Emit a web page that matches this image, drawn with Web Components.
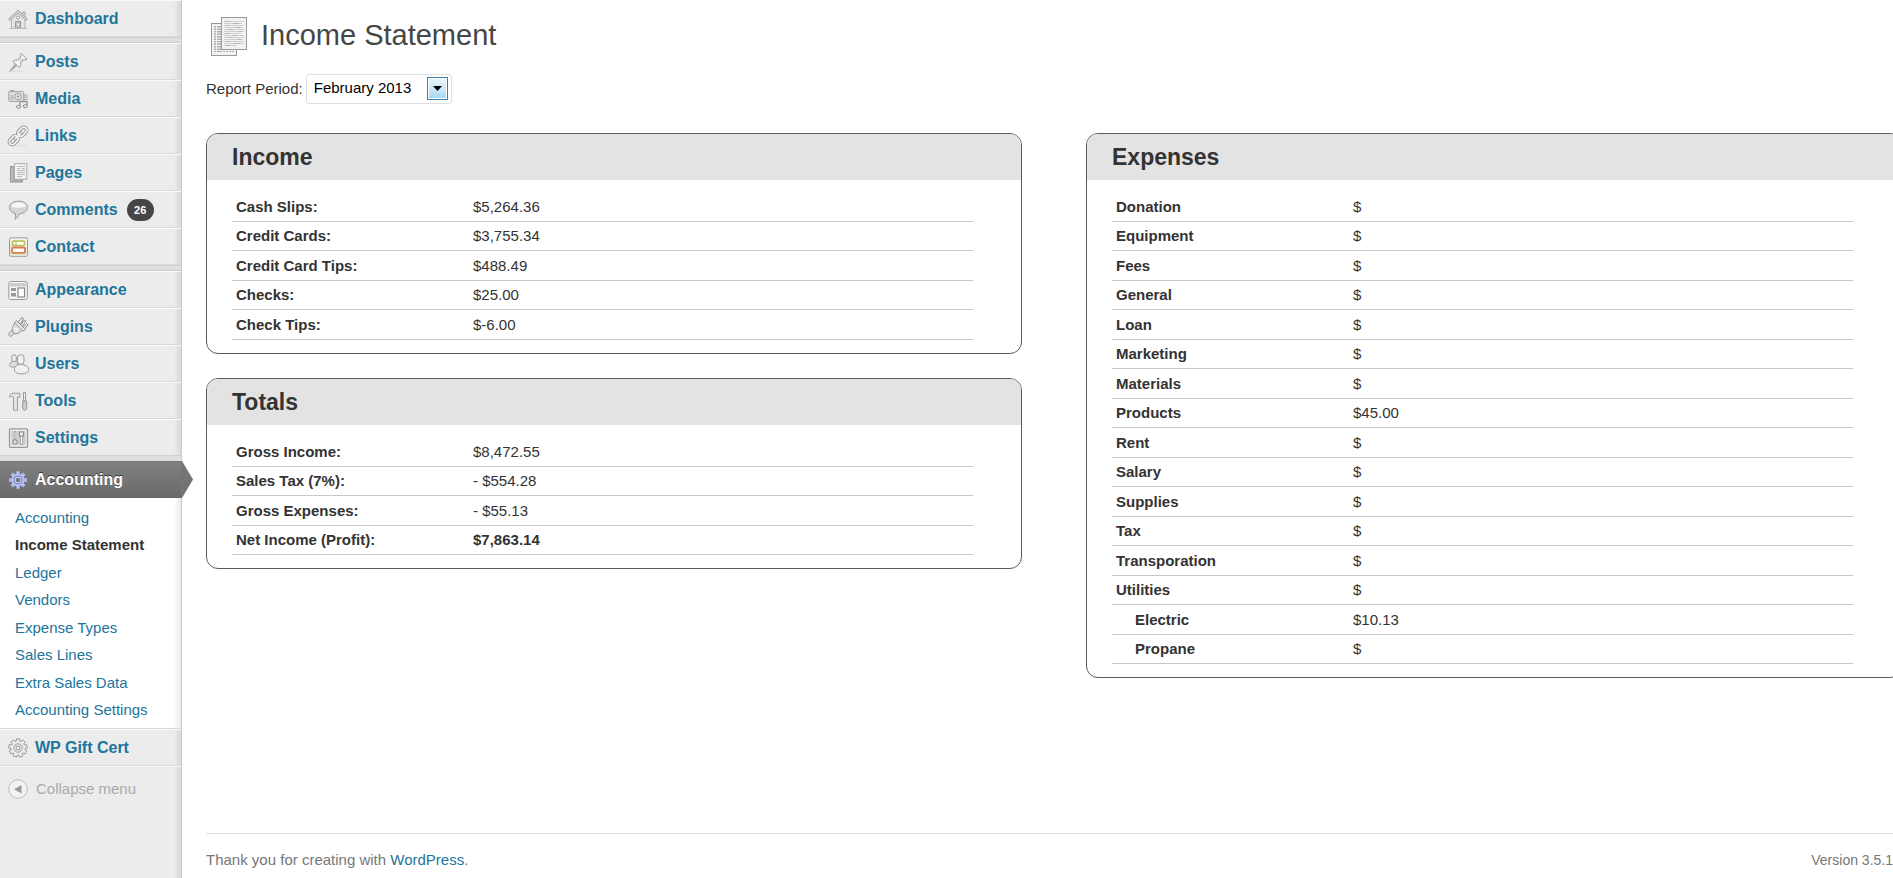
<!DOCTYPE html>
<html lang="en">
<head>
<meta charset="utf-8">
<title>Income Statement</title>
<style>
html, body { margin: 0; min-height: 100%; }
body { background: #fff; color: #333; font: 15px/20px "Liberation Sans", Arial, sans-serif; }
</style>
</head>
<body>
<admin-page></admin-page>
<script>
const gearPath = (n, outer, inner) => {
  const pts = [];
  for (let i = 0; i < n; i++) {
    const a = i * 2 * Math.PI / n;
    [[-.26, inner], [-.19, outer], [.19, outer], [.26, inner]].forEach(([d, r]) =>
      pts.push((10 + r * Math.sin(a + d)).toFixed(2) + ' ' + (10 - r * Math.cos(a + d)).toFixed(2)));
  }
  return 'M' + pts.join('L') + 'Z';
};

const ICONS = {
  dashboard: `<path d="M14.5 3h2.5v6l-2.5-2z" fill="#ddd" stroke="#aaa"/><path d="M3.5 10v9.300h13.500V10L10 4z" fill="#e6e6e6" stroke="#b5b5b5"/><path d="M1 11 10 2.500 19 11" fill="none" stroke="#a5a5a5" stroke-width="2.600"/><path d="M1.500 10.600 10 2.700 18.500 10.600" fill="none" stroke="#f4f4f4" stroke-width="1"/><circle cx="10" cy="8.500" r="1.500" fill="#fff" stroke="#999"/><path d="M7.500 12.500h5v6.500h-5z" fill="#ccc" stroke="#999"/><path d="M9 14h2.500v3H9z" fill="#fff" stroke="#aaa" stroke-width=".7"/><path d="M1 19.500h18" stroke="#bbb"/>`,
  posts: `<path d="M4 19.300h11" stroke="#ddd" stroke-width="1.500"/><path d="m7 12.500-5.500 7L8.500 14z" fill="#bbb" stroke="#999"/><path d="m13 1.500 6 5.500c-1.500 1-2.500.8-3.300.6L12.500 11c.3 2 0 3.400-1.200 4.500L4.800 9.300C6 8 7.500 8 9.300 8.200l3.300-3.500c-.3-1-.4-2 .4-3.200z" fill="#f6f6f6" stroke="#999"/><path d="m10 9 3.500-3.500M12 10l3-3" stroke="#bbb"/>`,
  media: `<rect x=".7" y="2.500" width="15" height="10" rx="1" fill="#ddd" stroke="#a5a5a5"/><path d="M2 2.500v-1h4v1M3 6v5M5 6v5" stroke="#aaa" fill="none"/><circle cx="10" cy="7.500" r="3.200" fill="#eee" stroke="#999"/><circle cx="10" cy="7.500" r="1.200" fill="#999"/><path d="M16 6h3v4.500h-3zM16 8h2" fill="#e4e4e4" stroke="#aaa"/><path d="M12 18v-5.500h7V17" fill="none" stroke="#999" stroke-width="1.400"/><ellipse cx="10.500" cy="17.800" rx="2" ry="1.500" fill="#eee" stroke="#888"/><ellipse cx="17.200" cy="17.200" rx="2" ry="1.500" fill="#eee" stroke="#888"/>`,
  links: `<path d="M8 19.800h11" stroke="#ddd"/><g fill="none" stroke-linecap="round" transform="rotate(-45 10 10)"><g stroke="#989898" stroke-width="3.600"><rect x="-1" y="7" width="10" height="6" rx="3"/><rect x="11" y="7" width="10" height="6" rx="3"/><path d="M6 10h8"/></g><g stroke="#f0f0f0" stroke-width="1.700"><rect x="-1" y="7" width="10" height="6" rx="3"/><rect x="11" y="7" width="10" height="6" rx="3"/><path d="M6 10h8"/></g></g>`,
  pages: `<rect x="2.500" y="3.500" width="12" height="15.500" fill="#aaa" stroke="#999"/><path d="M4 5v13" stroke="#ccc"/><rect x="6.500" y=".7" width="12.300" height="15.500" fill="#f4f4f4" stroke="#aaa"/><path d="M9 3.500h8M9 5.500h3M13.500 5.500H17M9 7.500h8M9 9.500h8M9 11.500h8M9 13.500h5" stroke="#bbb"/>`,
  comments: `<path d="M10.500 1.200c5.200 0 9 2.600 9 6.200 0 3.500-3.300 6-7.700 6.300-1.500 2.600-2.800 4.300-4.600 5.600.4-2 .5-3.800.1-5.900C3.800 12.600 1.500 10.400 1.500 7.400c0-3.600 3.800-6.200 9-6.200z" fill="#d6d6d6" stroke="#999"/><path d="M3 6c.5-2.500 3.500-3.700 7.500-3.700S17.500 3.500 18 6c-2.500 1.500-5 1.800-7.500 1.800S5.300 7.500 3 6z" fill="#f6f6f6"/>`,
  contact: `<rect x="1.500" y=".8" width="18" height="18.500" rx="1.500" fill="#f3f3ee" stroke="#999"/><rect x="4.500" y="4" width="12" height="4.500" rx="1" fill="#fff" stroke="#b5bd4c" stroke-width="1.500"/><path d="M8 4v4" stroke="#b5bd4c"/><rect x="4" y="10.500" width="13" height="5.500" rx="1.500" fill="#fff" stroke="#dc7a55" stroke-width="2"/><path d="M3 8.500v8.500h14.500" stroke="#cdd18a" fill="none" stroke-width=".8"/>`,
  appearance: `<rect x=".8" y="1.500" width="18.500" height="18" rx="2" fill="#f5f5f5" stroke="#999"/><path d="M2 3h16v3.500H2z" fill="#ccc"/><path d="M3 8h5v3H3zM3 13h5v3.500H3z" fill="#999"/><rect x="10" y="8" width="6.500" height="9" fill="#fff" stroke="#888" stroke-width="1.200"/>`,
  plugins: `<path d="m7 15-3 3.800c-1.500 1-4 0-3-2.300L5 12" fill="#ddd" stroke="#999"/><path d="m10.500 5 3.300-4.500 1.700 1L12.500 7M13 7.500l3.500-4.500L18 4l-3.500 5M15.500 10 18.500 6.500 20 7.800 16.500 12" fill="#eee" stroke="#8c8c8c"/><path d="m8.500 3.500 9 9c-1.500 1.300-2.500 1.500-4 1.300-2.500 2.700-5 3.200-7.500 2.700-2-2.300-2.500-5-.5-8C6 6.500 7 5 8.500 3.500z" fill="#e0e0e0" stroke="#909090"/><path d="m7 6.500 7.500 7.300" stroke="#999"/><path d="m6 12 4-1-2 4" fill="none" stroke="#fff"/>`,
  users: `<path d="M1.500 10.500C2 8 4 7 6 7s4 1 4 4-2 2-4 2-5 0-4.500-2.500z" fill="#ddd" stroke="#999"/><rect x="3.800" y=".8" width="4.500" height="7" rx="2.200" fill="#eee" stroke="#999"/><path d="M6.500 15.500c0-3.500 3-5 6.500-5s7.700 2 7.700 5-3.200 4.300-7.200 4.300-7-1.500-7-4.300z" fill="#f0f0f0" stroke="#999"/><rect x="9.500" y=".8" width="6.500" height="9.500" rx="3" fill="#f2f2f2" stroke="#999"/>`,
  tools: `<path d="M1.500 6c0-2.500 2-3.800 4-3.800h6.300v4H9.500v13H5.500v-13C4 5.500 3 5.500 1.500 6z" fill="#e6e6e6" stroke="#999"/><path d="M15.500 1.500h2V10h-2z" fill="#eee" stroke="#999"/><path d="M14.700 10h4v7.500c0 2-4 2-4 0z" fill="#ccc" stroke="#999"/>`,
  settings: `<rect x="1.500" y=".8" width="18" height="18.500" rx="1" fill="#ececec" stroke="#999" stroke-width="1.300"/><rect x="3.500" y="3" width="14" height="14" fill="#ccc"/><path d="M7 3.500v8M13.500 8.500V17" stroke="#888" stroke-width="2"/><path d="M7 4v7M13.500 9v7" stroke="#fff"/><circle cx="7" cy="14" r="2.300" fill="#ddd" stroke="#888"/><rect x="11.500" y="4" width="4" height="4" fill="#eee" stroke="#888"/>`,
  accounting: `<path d="${gearPath(8, 9, 6.4)}" fill="#b4bff3"/><circle cx="10" cy="10" r="4" fill="#c6cffa" stroke="#7480c0" stroke-width="1"/><circle cx="10" cy="10" r="2.200" fill="#757575"/>`,
  gift: `<path d="${gearPath(9, 9.3, 7)}" fill="#ececec" stroke="#999"/><circle cx="10" cy="10" r="4.300" fill="#ddd" stroke="#aaa"/><circle cx="10" cy="10" r="1.800" fill="#fff" stroke="#999"/>`
};

const INCOME = [['Cash Slips:', '$5,264.36'], ['Credit Cards:', '$3,755.34'], ['Credit Card Tips:', '$488.49'], ['Checks:', '$25.00'], ['Check Tips:', '$-6.00']];
const TOTALS = [['Gross Income:', '$8,472.55'], ['Sales Tax (7%):', '- $554.28'], ['Gross Expenses:', '- $55.13'], ['Net Income (Profit):', '$7,863.14', 'strong']];
const EXPENSES = [
  ...['Donation', 'Equipment', 'Fees', 'General', 'Loan', 'Marketing', 'Materials'].map(n => [n, '$']),
  ['Products', '$45.00'],
  ...['Rent', 'Salary', 'Supplies', 'Tax', 'Transporation', 'Utilities'].map(n => [n, '$']),
  ['Electric', '$10.13', 'sub'], ['Propane', '$', 'sub']
];

class MenuItem extends HTMLElement {
  connectedCallback() {
    const active = this.hasAttribute('active');
    this.attachShadow({ mode: 'open' }).innerHTML = `
<style>
:host { display: block; }
a { display: flex; align-items: center; gap: 7px; height: 35px; padding-left: 8px; border-top: 1px solid #fafafa; border-bottom: 1px solid #dadada;
  font-size: 16px; font-weight: bold; color: #21759b; text-decoration: none; }
svg { width: 20px; height: 20px; flex: none; overflow: visible; }
:host([active]) a { position: relative; background: linear-gradient(#808080, #6a6a6a); border-color: #777 transparent #666; color: #fff; text-shadow: 0 -1px 0 #333; }
a .tip { position: absolute; left: 100%; top: -1px; width: 12px; height: 37px; }
</style>
<a href="#"><svg viewBox="0 0 20 20" aria-hidden="true">${ICONS[this.getAttribute('icon')]}</svg><slot></slot>${active ? '<svg class="tip" viewBox="0 0 12 37" aria-hidden="true"><path d="M0 0h1l11 18.500L1 37H0z" fill="#747474"/></svg>' : ''}</a>`;
  }
}

class CountBadge extends HTMLElement {
  connectedCallback() {
    this.attachShadow({ mode: 'open' }).innerHTML = `
<style>:host { display: block; margin-left: 2px; min-width: 27px; border-radius: 11px; background: #464646; color: #fff; font-size: 11px; line-height: 22px; text-align: center; }</style><slot></slot>`;
  }
}

class SubMenu extends HTMLElement {
  connectedCallback() {
    const items = ['Accounting', 'Income Statement', 'Ledger', 'Vendors', 'Expense Types', 'Sales Lines', 'Extra Sales Data', 'Accounting Settings'];
    this.attachShadow({ mode: 'open' }).innerHTML = `
<style>
:host { display: block; background: linear-gradient(to right, #fff 174px, #e9e9e9); border-bottom: 1px solid #dadada; }
ul { margin: 0; padding: 6px 0 4px 15px; list-style: none; }
li { line-height: 27px; }
li:nth-child(even) { line-height: 28px; }
a { color: #21759b; text-decoration: none; }
a[aria-current] { color: #333; font-weight: bold; }
</style>
<ul>${items.map((t, i) => `<li><a href="#"${i === 1 ? ' aria-current="page"' : ''}>${t}</a></li>`).join('')}</ul>`;
  }
}

class AdminMenu extends HTMLElement {
  connectedCallback() {
    this.attachShadow({ mode: 'open' }).innerHTML = `
<style>
:host { display: block; box-sizing: border-box; background: linear-gradient(to right, #ececec 174px, #d8d8d8); border-right: 1px solid #ccc; }
.gap { height: 4px; background: #dfdfdf; border-top: 1px solid #d0d0d0; border-bottom: 1px solid #ccc; }
.gap.flush { height: 5px; border-bottom: 0; margin-top: -1px; }
button { display: flex; align-items: center; gap: 8px; height: 44px; width: 100%; padding: 0 0 0 8px; border: 0; border-top: 1px solid #f6f6f6; background: none; color: #aaa; font: inherit; text-align: left; }
svg { width: 20px; height: 20px; }
</style>
<nav aria-label="Main">
<menu-item icon="dashboard">Dashboard</menu-item>
<div class="gap"></div>
<menu-item icon="posts">Posts</menu-item>
<menu-item icon="media">Media</menu-item>
<menu-item icon="links">Links</menu-item>
<menu-item icon="pages">Pages</menu-item>
<menu-item icon="comments">Comments <count-badge>26</count-badge></menu-item>
<menu-item icon="contact">Contact</menu-item>
<div class="gap"></div>
<menu-item icon="appearance">Appearance</menu-item>
<menu-item icon="plugins">Plugins</menu-item>
<menu-item icon="users">Users</menu-item>
<menu-item icon="tools">Tools</menu-item>
<menu-item icon="settings">Settings</menu-item>
<div class="gap flush"></div>
<menu-item icon="accounting" active>Accounting</menu-item>
<sub-menu></sub-menu>
<menu-item icon="gift">WP Gift Cert</menu-item>
<button type="button"><svg viewBox="0 0 20 20" aria-hidden="true"><circle cx="10" cy="10" r="9.300" fill="#f2f2f2" stroke="#bbb"/><path d="M13.500 6v8.500L6 10.200z" fill="#999"/></svg>Collapse menu</button>
</nav>`;
  }
}

class PeriodPicker extends HTMLElement {
  connectedCallback() {
    this.attachShadow({ mode: 'open' }).innerHTML = `
<style>
:host { display: flex; align-items: center; gap: 3px; }
.box { position: relative; }
select { display: block; appearance: none; width: 146px; height: 30px; padding: 0 24px 3px 7px; border: 1px solid #dfdfdf; border-radius: 3px; background: #fff; color: #000; font: inherit; }
svg { position: absolute; right: 4px; top: 3px; width: 21px; height: 23px; pointer-events: none; }
</style>
<label for="period">Report Period:</label>
<div class="box"><select id="period"><option>February 2013</option></select>
<svg viewBox="0 0 21 23" aria-hidden="true"><defs><linearGradient id="g" x2="0" y2="1"><stop offset="0" stop-color="#e6f4fc"/><stop offset=".5" stop-color="#cdeafa"/><stop offset="1" stop-color="#a5d8f5"/></linearGradient></defs><rect x=".5" y=".5" width="20" height="22" fill="#fff" stroke="#3c7fb1"/><rect x="2" y="2" width="17" height="19" fill="url(#g)"/><path d="M6 9h9l-4.500 5z" fill="#000"/></svg></div>`;
  }
}

class ReportPanel extends HTMLElement {
  set rows(rows) {
    this.attachShadow({ mode: 'open' }).innerHTML = `
<style>
:host { display: block; border: 1px solid #5c5c5c; border-radius: 12px; overflow: hidden; }
h2 { margin: 0; padding: 0 25px; background: #e3e3e3; font-size: 23px; line-height: 46px; }
.body { padding: 12px 48px 13px 25px; }
table { width: 100%; table-layout: fixed; border-collapse: separate; border-spacing: 0; }
th, td { box-sizing: border-box; height: 30px; padding: 0 4px; border-bottom: 1px solid #c8c8c8; line-height: 20px; text-align: left; vertical-align: middle; }
tr:nth-child(even) > * { height: 29px; }
th { width: 237px; }
.sub th { padding-left: 23px; }
.strong td { font-weight: bold; }
</style>
<h2>${this.getAttribute('heading')}</h2>
<div class="body"><table aria-label="${this.getAttribute('heading')}"><tbody>${rows.map(([n, v, c]) => `<tr class="${c || ''}"><th scope="row">${n}</th><td>${v}</td></tr>`).join('')}</tbody></table></div>`;
  }
}

class AdminPage extends HTMLElement {
  connectedCallback() {
    const root = this.attachShadow({ mode: 'open' });
    root.innerHTML = `
<style>
:host { display: grid; grid-template-columns: 182px minmax(0, 1fr); min-height: 100vh; overflow: hidden; }
.content { display: flex; flex-direction: column; padding-left: 24px; }
header { display: flex; align-items: center; gap: 14px; padding: 16px 0 0 5px; }
header svg { width: 36px; height: 40px; }
h1 { margin: 0; padding-bottom: 2px; font-size: 29px; font-weight: normal; line-height: 38px; color: #464646; }
period-picker { margin: 18px 0 29px; }
.columns { display: grid; grid-template-columns: 1fr 1fr; gap: 64px; align-items: start; margin-right: -9px; }
.stack { display: grid; gap: 24px; }
footer { display: flex; justify-content: space-between; align-items: baseline; margin-top: auto; padding: 16px 0 8px; border-top: 1px solid #dfdfdf; color: #777; }
footer p { margin: 0; }
.version { font-size: 14px; }
footer a { color: #21759b; text-decoration: none; }
</style>
<admin-menu></admin-menu>
<div class="content">
<header><svg viewBox="0 0 36 40" aria-hidden="true"><rect x=".5" y="7.500" width="25" height="32" fill="#f2f2f2" stroke="#999"/><path d="M4 10v26M7 10v26M9 10v26" stroke="#999" stroke-width="1.500" stroke-dasharray="1.500 1"/><path d="M3 35.500h20" stroke="#aaa" stroke-dasharray="2 1"/><rect x="10.500" y="1.500" width="25" height="32" fill="#f2f2f2" stroke="#999"/><path d="M13 5.500h20M13 7.500h18M13 9.500h20M13 11.500h19M13 13.500h20M13 15.500h20M13 17.500h17M13 19.500h20M13 21.500h20M13 23.500h19M13 25.500h20M13 27.500h20M13 29.500h12" stroke="#cfcfcf"/><path d="M14 5.500h4M22 7.500h6M15 9.500h3M25 11.500h5M16 13.500h6M28 15.500h3M14 17.500h5M22 19.500h4M17 21.500h3M26 23.500h4M15 25.500h5M23 27.500h6M15 29.500h4" stroke="#b5b5b5"/></svg><h1>Income Statement</h1></header>
<period-picker></period-picker>
<main class="columns">
<div class="stack"><report-panel heading="Income"></report-panel><report-panel heading="Totals"></report-panel></div>
<report-panel heading="Expenses"></report-panel>
</main>
<footer><p>Thank you for creating with <a href="#">WordPress</a>.</p><p class="version">Version 3.5.1</p></footer>
</div>`;
    const data = [INCOME, TOTALS, EXPENSES];
    customElements.upgrade(root);
    root.querySelectorAll('report-panel').forEach((p, i) => { p.rows = data[i]; });
  }
}

customElements.define('count-badge', CountBadge);
customElements.define('menu-item', MenuItem);
customElements.define('sub-menu', SubMenu);
customElements.define('admin-menu', AdminMenu);
customElements.define('period-picker', PeriodPicker);
customElements.define('report-panel', ReportPanel);
customElements.define('admin-page', AdminPage);
</script>
</body>
</html>
